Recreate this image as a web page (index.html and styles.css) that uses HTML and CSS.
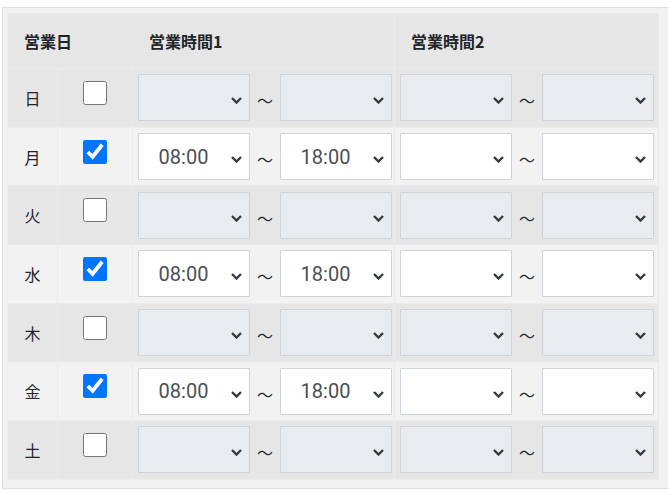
FILE: index.html
```html
<!DOCTYPE html>
<html lang="ja">
<head>
<meta charset="utf-8">
<title>営業時間</title>
<link rel="stylesheet" href="styles.css">
</head>
<body>
<div class="panel">
  <table class="hours">
    <colgroup>
      <col class="c-day"><col class="c-chk"><col class="c-t1"><col class="c-t2">
    </colgroup>
    <thead>
      <tr><th colspan="2">営業日</th><th>営業時間1</th><th>営業時間2</th></tr>
    </thead>
    <tbody>
      <tr class="off">
        <td class="day">日</td><td class="chk"><input type="checkbox"></td>
        <td><div class="range"><select disabled><option></option></select><span class="tilde">～</span><select disabled><option></option></select></div></td>
        <td><div class="range"><select disabled><option></option></select><span class="tilde">～</span><select disabled><option></option></select></div></td>
      </tr>
      <tr class="on">
        <td class="day">月</td><td class="chk"><input type="checkbox" checked></td>
        <td><div class="range"><select><option>08:00</option></select><span class="tilde">～</span><select><option>18:00</option></select></div></td>
        <td><div class="range"><select><option></option></select><span class="tilde">～</span><select><option></option></select></div></td>
      </tr>
      <tr class="off">
        <td class="day">火</td><td class="chk"><input type="checkbox"></td>
        <td><div class="range"><select disabled><option></option></select><span class="tilde">～</span><select disabled><option></option></select></div></td>
        <td><div class="range"><select disabled><option></option></select><span class="tilde">～</span><select disabled><option></option></select></div></td>
      </tr>
      <tr class="on">
        <td class="day">水</td><td class="chk"><input type="checkbox" checked></td>
        <td><div class="range"><select><option>08:00</option></select><span class="tilde">～</span><select><option>18:00</option></select></div></td>
        <td><div class="range"><select><option></option></select><span class="tilde">～</span><select><option></option></select></div></td>
      </tr>
      <tr class="off">
        <td class="day">木</td><td class="chk"><input type="checkbox"></td>
        <td><div class="range"><select disabled><option></option></select><span class="tilde">～</span><select disabled><option></option></select></div></td>
        <td><div class="range"><select disabled><option></option></select><span class="tilde">～</span><select disabled><option></option></select></div></td>
      </tr>
      <tr class="on">
        <td class="day">金</td><td class="chk"><input type="checkbox" checked></td>
        <td><div class="range"><select><option>08:00</option></select><span class="tilde">～</span><select><option>18:00</option></select></div></td>
        <td><div class="range"><select><option></option></select><span class="tilde">～</span><select><option></option></select></div></td>
      </tr>
      <tr class="off">
        <td class="day">土</td><td class="chk"><input type="checkbox"></td>
        <td><div class="range"><select disabled><option></option></select><span class="tilde">～</span><select disabled><option></option></select></div></td>
        <td><div class="range"><select disabled><option></option></select><span class="tilde">～</span><select disabled><option></option></select></div></td>
      </tr>
    </tbody>
  </table>
</div>
</body>
</html>
```
FILE: styles.css
```css
html, body {
  margin: 0;
  padding: 0;
  background: #fff;
  overflow: hidden;
}
body {
  font-family: "Noto Sans CJK JP", "Noto Sans", sans-serif;
  font-size: 16px;
  color: #212529;
}
.panel {
  margin: 7px 0 0 2px;
  border: 1px solid #dedede;
  border-right: none;
  background: #f2f2f2;
  padding: 5px 0 8px 4px;
}
.hours {
  width: 651px;
  table-layout: fixed;
  border-collapse: collapse;
}
.c-day { width: 50px; }
.c-chk { width: 75px; }
.c-t1 { width: 262px; }
.c-t2 { width: 264px; }
.hours th,
.hours td {
  border: 1px solid #ebebeb;
}
.hours th {
  background: #e6e6e6;
  height: 54px;
  padding: 0 0 0 16px;
  text-align: left;
  font-weight: 700;
  font-size: 16px;
  vertical-align: middle;
}
.hours td {
  height: 57.7px;
  padding: 0 0 0 5px;
  vertical-align: middle;
}
.hours tr.off td { background: #e6e6e6; }
.hours tr.on td { background: #f2f2f2; }
.hours td.day {
  padding: 0;
  text-align: center;
  font-size: 16px;
}
.hours td.chk {
  padding: 0;
}
.chk input {
  display: block;
  width: 24px;
  height: 24px;
  margin: 0 auto 10px;
}
.range {
  display: flex;
  align-items: center;
}
.range select {
  -webkit-appearance: none;
  appearance: none;
  width: 112px;
  height: 47px;
  margin: 0;
  border: 1px solid #ced4da;
  border-radius: 1px;
  background-color: #fff;
  background-image: url("data:image/svg+xml,%3Csvg xmlns='http://www.w3.org/2000/svg' viewBox='0 0 11 7'%3E%3Cpath d='M1 1l4.5 4.5L10 1' fill='none' stroke='%23343a40' stroke-width='2.4'/%3E%3C/svg%3E");
  background-repeat: no-repeat;
  background-position: right 7px top 22px;
  background-size: 11px 7px;
  padding: 0 37px 0 16px;
  font-family: Roboto, "Noto Sans", sans-serif;
  font-size: 20px;
  color: #495057;
  text-align: center;
  text-align-last: center;
}
.range select:disabled {
  background-color: #e9ecef;
  opacity: 1;
}
.tilde {
  width: 30px;
  text-align: center;
  font-size: 16px;
  line-height: 1;
  padding-top: 5px;
  color: #212529;
}
```
